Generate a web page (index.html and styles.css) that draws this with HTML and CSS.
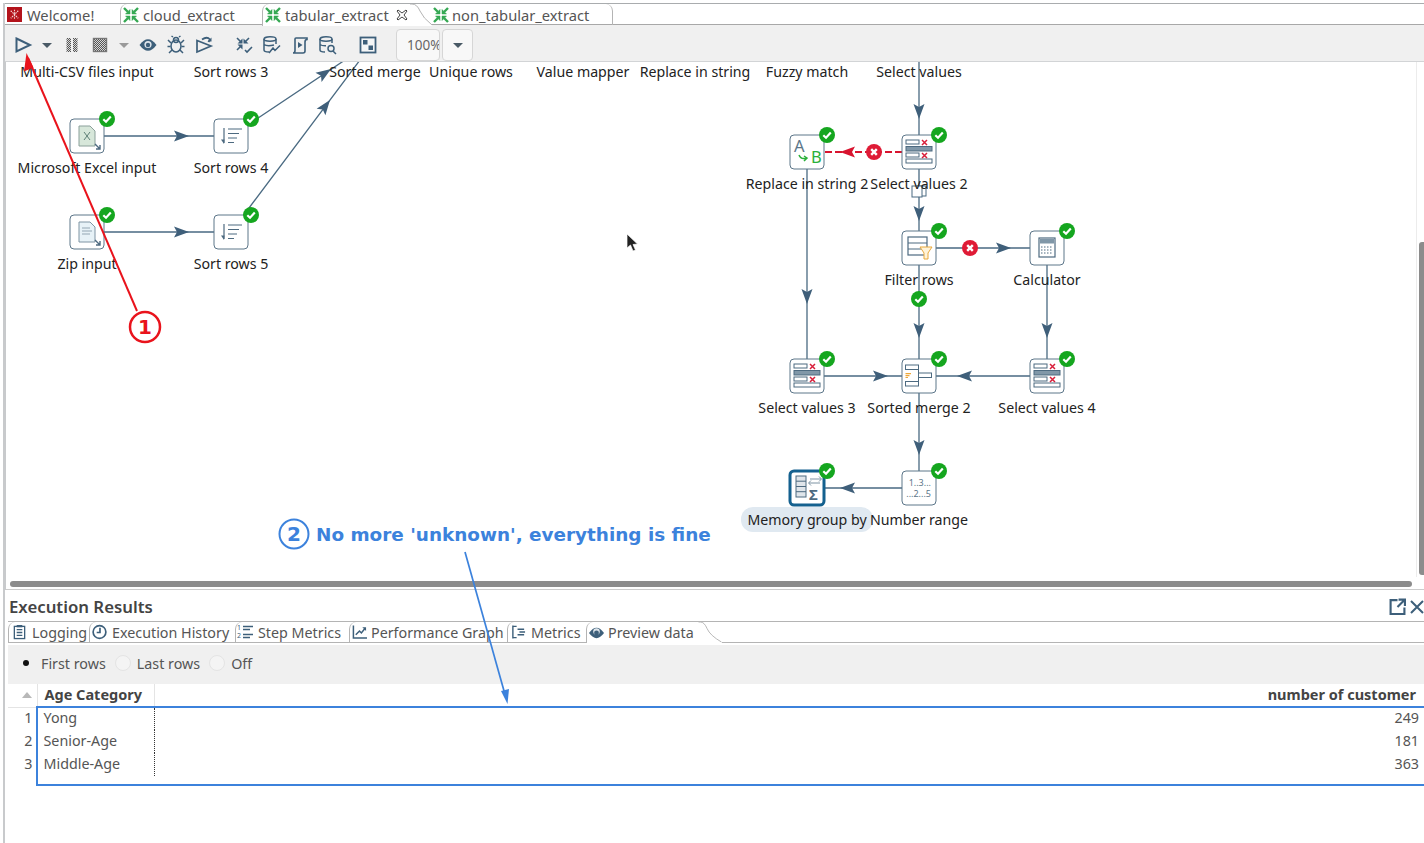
FILE: index.html
```html
<!DOCTYPE html>
<html lang="en">
<head>
    <meta charset="UTF-8"/>
    <title>tabular_extract</title>
    <link rel="stylesheet" href="styles.css">
</head>
<body>

<!-- shared icons -->
<svg class="sprite" xmlns="http://www.w3.org/2000/svg">
    <defs>
        <pattern id="dither" width="2" height="2" patternUnits="userSpaceOnUse">
            <rect width="2" height="2" fill="#d8d8d8"/>
            <rect width="1" height="1" fill="#555"/>
            <rect x="1" y="1" width="1" height="1" fill="#555"/>
        </pattern>
    </defs>
    <symbol id="spoon" viewBox="0 0 16 16">
        <g fill="#35a853" stroke="#35a853">
            <path d="M1 1L5 5M15 1L11 5M1 15L5 11M15 15L11 11" stroke-width="2.4"/>
            <path d="M7 7V2.5L2.5 7ZM9 7V2.5L13.5 7ZM7 9V13.5L2.5 9ZM9 9V13.5L13.5 9Z" stroke-width=".5"/>
        </g>
    </symbol>
    <symbol id="run" viewBox="0 0 20 20"><path d="M3.500 3.500L17 10L3.500 16.500Z" fill="none" stroke="#3d5f7a" stroke-width="2"/></symbol>
    <symbol id="caret" viewBox="0 0 20 20"><path d="M5 8H15L10 13Z" fill="#4a5a66"/></symbol>
    <symbol id="caret-off" viewBox="0 0 20 20"><path d="M5 8H15L10 13Z" fill="#9a9a9a"/></symbol>
    <symbol id="pause" viewBox="0 0 20 20"><path d="M4.500 3H9V17H4.500ZM11 3H15.500V17H11Z" fill="url(#dither)"/></symbol>
    <symbol id="stop" viewBox="0 0 20 20"><rect x="3.500" y="3.500" width="13" height="13" fill="url(#dither)" stroke="#777" stroke-width="1.400"/></symbol>
    <symbol id="eye" viewBox="0 0 20 20"><path d="M1.500 10Q10 -1.500 18.500 10Q10 21.500 1.500 10Z" fill="#3d5f7a"/><circle cx="10" cy="9.500" r="3.600" fill="#dfe6ec"/><circle cx="10" cy="10" r="2.200" fill="#3d5f7a"/></symbol>
    <symbol id="bug" viewBox="0 0 20 20"><g fill="none" stroke="#3d5f7a" stroke-width="1.500"><ellipse cx="10" cy="11" rx="5" ry="6"/><circle cx="10" cy="5" r="2.500"/><path d="M5 8L2 5M15 8L18 5M4.500 11.500H1.500M15.500 11.500H18.500M6 15L3 18M14 15L17 18M7 2L5.500 1M13 2L14.500 1"/></g></symbol>
    <symbol id="replay" viewBox="0 0 20 20"><g fill="none" stroke="#3d5f7a" stroke-width="1.700"><path d="M3 5.500L17 11L3 17Z"/><path d="M8 4.500Q13 1 16 4.500L14.500 7"/></g><path d="M17.500 2.500V6.500H13.500Z" fill="#3d5f7a"/></symbol>
    <symbol id="verify" viewBox="0 0 20 20"><g fill="none" stroke="#3d5f7a" stroke-width="1.600"><path d="M3 3L7 7M15 3L11 7M3 15L7 11M11 15L13 17L18 12"/></g><path d="M8.500 8.500V3.500L3.500 8.500ZM9.500 8.500V3.500L14.500 8.500ZM8.500 9.500V14.500L3.500 9.500Z" fill="#3d5f7a"/></symbol>
    <symbol id="db-graph" viewBox="0 0 20 20"><g fill="none" stroke="#3d5f7a" stroke-width="1.500"><ellipse cx="8" cy="4" rx="6" ry="2.200"/><path d="M2 4V15Q2 17 7 17M14 4V9M2 9.500Q5 11.500 12 10M7 18L11 13L13 15.500L18 10.500"/></g></symbol>
    <symbol id="script" viewBox="0 0 20 20"><g fill="none" stroke="#3d5f7a" stroke-width="1.600"><path d="M6 3H17V4.500Q15 4.500 15 7V16Q15 18 13 18H3Q5 18 5 15.500V4Q5 3 6 3Z"/></g><path d="M8 7L12.500 10L8 13Z" fill="#3d5f7a"/></symbol>
    <symbol id="db-search" viewBox="0 0 20 20"><g fill="none" stroke="#3d5f7a" stroke-width="1.500"><ellipse cx="8" cy="4" rx="6" ry="2.200"/><path d="M2 4V15Q2 17 7 17M14 4V8M2 9.500Q4 11 8 10.800"/><circle cx="13" cy="13.500" r="3"/><path d="M15 16L18 19"/></g></symbol>
    <symbol id="window" viewBox="0 0 20 20"><rect x="2.500" y="2.500" width="15" height="15" fill="#f4f6f7" stroke="#3d5f7a" stroke-width="1.800"/><path d="M5 5H9.500V9.500H5ZM10.500 10.500H15V15H10.500Z" fill="#3d5f7a"/></symbol>

    <symbol id="ok" viewBox="0 0 16 16"><circle cx="8" cy="8" r="8" fill="#15a61f"/><path d="M4.300 8.200L7 10.700L11.800 5.600" fill="none" stroke="#fff" stroke-width="2.200"/></symbol>
    <symbol id="err" viewBox="0 0 16 16"><circle cx="8" cy="8" r="8" fill="#df1b36"/><path d="M5.200 5.200L10.800 10.800M10.800 5.200L5.200 10.800" stroke="#fff" stroke-width="2.400"/></symbol>
    <symbol id="head" viewBox="0 0 16 12" overflow="visible"><path d="M15 6L0 .5L3 6L0 11.500Z" fill="#3f5f7a"/></symbol>

    <symbol id="n-select" viewBox="0 0 34 34">
        <g fill="#fff" stroke="#4d6a80">
            <rect x="4" y="5" width="13" height="4"/>
            <rect x="4" y="11.500" width="26" height="4.500" fill="#8097a8"/>
            <rect x="4" y="18" width="13" height="4"/>
            <rect x="4" y="24" width="26" height="4"/>
        </g>
        <path d="M20 5L25 10M25 5L20 10M20 18L25 23M25 18L20 23" stroke="#d81f3a" stroke-width="1.500"/>
    </symbol>
    <symbol id="n-sort" viewBox="0 0 34 34">
        <path d="M10 9V24" stroke="#4d6a80" stroke-width="1.200"/>
        <path d="M7 20.500L10 25L10.500 20.500Z" fill="#4d6a80"/>
        <path d="M14 10H28M14 14.500H25M14 19H23M14 23.500H20" stroke="#4d6a80" stroke-width="1.200"/>
    </symbol>
    <symbol id="n-excel" viewBox="0 0 34 34">
        <path d="M9 7H20L25 12V27H9Z" fill="#d7e7da" stroke="#8ba09a"/>
        <path d="M14 13L20 21M20 13L14 21" stroke="#5e7f76" stroke-width="1"/>
        <path d="M25 25L30 30M30 26V30H26" fill="none" stroke="#4d6a80" stroke-width="1.400"/>
    </symbol>
    <symbol id="n-zip" viewBox="0 0 34 34">
        <path d="M9 7H20L25 12V27H9Z" fill="#e7f2f7" stroke="#7f94a3"/>
        <path d="M12 13H20M12 16H22M12 19H20" stroke="#93a6b3" stroke-width="1"/>
        <path d="M25 25L30 30M30 26V30H26" fill="none" stroke="#4d6a80" stroke-width="1.400"/>
    </symbol>
    <symbol id="n-filter" viewBox="0 0 34 34">
        <rect x="6" y="6" width="19" height="18" fill="#fff" stroke="#4d6a80" stroke-width="1.200"/>
        <path d="M6 12H25M6 18H25" stroke="#4d6a80" stroke-width="1.200"/>
        <path d="M18 16H30L26 22V28H22V22Z" fill="#fff3d8" stroke="#e8a93d"/>
    </symbol>
    <symbol id="n-calc" viewBox="0 0 34 34">
        <rect x="9" y="7" width="16" height="19" fill="#fff" stroke="#4d6a80" stroke-width="1.200"/>
        <rect x="10" y="8" width="14" height="4.500" fill="#8097a8"/>
        <path d="M11 16H23M11 19H23M11 22H23" stroke="#4d6a80" stroke-width="1.200" stroke-dasharray="1.500 1.500"/>
    </symbol>
    <symbol id="n-merge" viewBox="0 0 34 34">
        <path d="M16.500 8V25" fill="none" stroke="#4d6a80"/>
        <g fill="#fff" stroke="#4d6a80">
            <rect x="3.500" y="6" width="13" height="4.500"/>
            <rect x="3.500" y="22.500" width="13" height="4.500"/>
            <rect x="16.500" y="14" width="13" height="4.500"/>
        </g>
        <path d="M3.500 14H9V15.200H3.500ZM3.500 16H7.500V17.200H3.500ZM3.500 18H6V19H3.500Z" fill="#eda73a"/>
    </symbol>
    <symbol id="n-group" viewBox="0 0 34 34">
        <rect x="6" y="5" width="10" height="21" fill="#dfe5ea" stroke="#4d6a80"/>
        <path d="M6 10.200H16M6 15.500H16M6 20.700H16" stroke="#4d6a80"/>
        <path d="M20 8H31M29 5.500L31.500 8L29 10.500M30 12H19M21 9.500L18.500 12L21 14.500" fill="none" stroke="#7d93a3"/>
    </symbol>

    <symbol id="t-log" viewBox="0 0 16 16"><g fill="none" stroke="#3d5f7a" stroke-width="1.400"><rect x="2.500" y="2" width="11" height="13"/><path d="M5 5.500H11M5 8.500H11M5 11.500H11"/></g><path d="M5 .5H11V3H5Z" fill="#3d5f7a"/></symbol>
    <symbol id="t-clock" viewBox="0 0 16 16"><g fill="none" stroke="#3d5f7a" stroke-width="1.800"><circle cx="8" cy="8" r="6.800"/><path d="M8.500 3.500V8.500H5"/></g></symbol>
    <symbol id="t-steps" viewBox="0 0 18 16"><path d="M7 2.500H17M7 5.500H14M7 10.500H17M7 13.500H14" stroke="#3d5f7a" stroke-width="1.300"/></symbol>
    <symbol id="t-graph" viewBox="0 0 16 16"><g fill="none" stroke="#3d5f7a" stroke-width="1.600"><path d="M1.500 1V14.500H16"/><path d="M4 11L8 7L10 9L14 4"/></g><path d="M11 3H15V7Z" fill="#3d5f7a"/></symbol>
    <symbol id="t-metrics" viewBox="0 0 16 16"><g fill="none" stroke="#3d5f7a" stroke-width="1.500"><path d="M2 1V15M2 2H6M2 14H6"/><path d="M7 5H14M9 8H15M7 11H14"/></g></symbol>
    <symbol id="t-eye" viewBox="0 0 16 16"><path d="M0 8Q8 -3 16 8Q8 19 0 8Z" fill="#3d5f7a"/><circle cx="8" cy="6.500" r="3.500" fill="#dfe6ec"/><circle cx="8" cy="8" r="2.600" fill="#3d5f7a"/></symbol>
</svg>

<div class="app">
    <!-- editor tabs -->
    <div class="tabs">
        <div class="tab tab-welcome">
            <svg class="tab-logo" viewBox="0 0 16 16">
                <rect width="16" height="16" fill="#b3131b"/>
                <path d="M4 4L12 12M12 4L4 12M8 3V13" stroke="#f2d5d5" stroke-width="1.200" stroke-dasharray="1.600 1"/>
            </svg>
            <span>Welcome!</span>
        </div>
        <div class="tab tab-cloud">
            <svg class="tab-icon"><use href="#spoon"/></svg>
            <span>cloud_extract</span>
        </div>
        <div class="tab tab-active">
            <svg class="tab-icon"><use href="#spoon"/></svg>
            <span>tabular_extract</span>
            <svg class="tab-close" viewBox="0 0 12 12">
                <path d="M2 1L6 4L10 1L11 2L8 6L11 10L10 11L6 8L2 11L1 10L4 6L1 2Z" fill="#fff" stroke="#444"/>
            </svg>
        </div>
        <svg class="tab-curve" viewBox="0 0 22 22">
            <path d="M0 0H2Q7 0 10 7T22 21" fill="none" stroke="#b4b4b4"/>
        </svg>
        <div class="tab tab-last">
            <svg class="tab-icon"><use href="#spoon"/></svg>
            <span>non_tabular_extract</span>
        </div>
    </div>

    <!-- run toolbar -->
    <div class="toolbar">
        <svg class="tool"><use href="#run"/></svg>
        <svg class="tool tool-drop"><use href="#caret"/></svg>
        <svg class="tool tool-pause"><use href="#pause"/></svg>
        <svg class="tool"><use href="#stop"/></svg>
        <svg class="tool tool-drop"><use href="#caret-off"/></svg>
        <svg class="tool"><use href="#eye"/></svg>
        <svg class="tool"><use href="#bug"/></svg>
        <svg class="tool"><use href="#replay"/></svg>
        <svg class="tool tool-next"><use href="#verify"/></svg>
        <svg class="tool"><use href="#db-graph"/></svg>
        <svg class="tool"><use href="#script"/></svg>
        <svg class="tool"><use href="#db-search"/></svg>
        <svg class="tool tool-next"><use href="#window"/></svg>
        <div class="zoom-box">100%</div>
        <div class="zoom-drop"><svg class="tool-caret"><use href="#caret"/></svg></div>
    </div>

    <!-- graph canvas, drawn in page coordinates -->
    <div class="canvas">
        <svg class="graph" viewBox="6 62 1418 527" width="1418" height="527">
            <g class="hops">
                <path d="M104 136H214M104 232H214"/>
                <path d="M231 136L375 40M231 232L375 40"/>
                <path d="M919 40V135M919 168V232M919 264V359M936 248H1030"/>
                <path d="M807 168V359M1047 264V359"/>
                <path d="M824 376H902M1030 376H936M919 393V471M902 488H824"/>
            </g>
            <path class="hop-error" d="M902 152H824"/>

            <use href="#head" x="174" y="130" width="16" height="12"/>
            <use href="#head" x="174" y="226" width="16" height="12"/>
            <use href="#head" transform="translate(331 69) rotate(-33.700) translate(-15 -6)" width="16" height="12"/>
            <use href="#head" transform="translate(330 100) rotate(-53.100) translate(-15 -6)" width="16" height="12"/>
            <use href="#head" transform="translate(919 119) rotate(90) translate(-15 -6)" width="16" height="12"/>
            <use href="#head" transform="translate(919 221) rotate(90) translate(-15 -6)" width="16" height="12"/>
            <use href="#head" transform="translate(919 338) rotate(90) translate(-15 -6)" width="16" height="12"/>
            <use href="#head" transform="translate(807 304) rotate(90) translate(-15 -6)" width="16" height="12"/>
            <use href="#head" transform="translate(1047 338) rotate(90) translate(-15 -6)" width="16" height="12"/>
            <use href="#head" transform="translate(919 455) rotate(90) translate(-15 -6)" width="16" height="12"/>
            <use href="#head" x="996" y="242" width="16" height="12"/>
            <use href="#head" x="873" y="370" width="16" height="12"/>
            <use href="#head" transform="translate(957 376) rotate(180) translate(-15 -6)" width="16" height="12"/>
            <use href="#head" transform="translate(840 488) rotate(180) translate(-15 -6)" width="16" height="12"/>
            <path class="head-error" d="M840 152L855 146.500L852 152L855 157.500Z"/>

            <g class="copy-mark">
                <rect x="917" y="186" width="9" height="10"/>
                <rect x="912" y="186" width="10" height="11"/>
            </g>

            <g class="node-box">
                <rect x="70" y="119" width="34" height="34" rx="4"/>
                <rect x="214" y="119" width="34" height="34" rx="4"/>
                <rect x="70" y="215" width="34" height="34" rx="4"/>
                <rect x="214" y="215" width="34" height="34" rx="4"/>
                <rect x="790" y="135" width="34" height="34" rx="4"/>
                <rect x="902" y="135" width="34" height="34" rx="4"/>
                <rect x="902" y="231" width="34" height="34" rx="4"/>
                <rect x="1030" y="231" width="34" height="34" rx="4"/>
                <rect x="790" y="359" width="34" height="34" rx="4"/>
                <rect x="902" y="359" width="34" height="34" rx="4"/>
                <rect x="1030" y="359" width="34" height="34" rx="4"/>
                <rect x="902" y="471" width="34" height="34" rx="4"/>
            </g>
            <rect class="node-selected" x="790" y="471" width="34" height="34" rx="4"/>

            <use href="#n-excel" x="70" y="119" width="34" height="34"/>
            <use href="#n-sort" x="214" y="119" width="34" height="34"/>
            <use href="#n-zip" x="70" y="215" width="34" height="34"/>
            <use href="#n-sort" x="214" y="215" width="34" height="34"/>
            <use href="#n-select" x="902" y="135" width="34" height="34"/>
            <use href="#n-filter" x="902" y="231" width="34" height="34"/>
            <use href="#n-calc" x="1030" y="231" width="34" height="34"/>
            <use href="#n-select" x="790" y="359" width="34" height="34"/>
            <use href="#n-merge" x="902" y="359" width="34" height="34"/>
            <use href="#n-select" x="1030" y="359" width="34" height="34"/>
            <use href="#n-group" x="790" y="471" width="34" height="34"/>

            <text class="replace-a" x="794" y="152">A</text>
            <path class="replace-arrow" d="M799 155Q801 160 806 158M804 156L807 158L804 161"/>
            <text class="replace-b" x="811" y="163">B</text>
            <text class="range-text" x="931" y="486">1..3...</text>
            <text class="range-text" x="931" y="497">...2...5</text>
            <text class="sigma" x="809" y="500">Σ</text>

            <use href="#ok" x="99" y="111" width="16" height="16"/>
            <use href="#ok" x="243" y="111" width="16" height="16"/>
            <use href="#ok" x="99" y="207" width="16" height="16"/>
            <use href="#ok" x="243" y="207" width="16" height="16"/>
            <use href="#ok" x="819" y="127" width="16" height="16"/>
            <use href="#ok" x="931" y="127" width="16" height="16"/>
            <use href="#ok" x="931" y="223" width="16" height="16"/>
            <use href="#ok" x="1059" y="223" width="16" height="16"/>
            <use href="#ok" x="819" y="351" width="16" height="16"/>
            <use href="#ok" x="931" y="351" width="16" height="16"/>
            <use href="#ok" x="1059" y="351" width="16" height="16"/>
            <use href="#ok" x="819" y="463" width="16" height="16"/>
            <use href="#ok" x="931" y="463" width="16" height="16"/>
            <use href="#ok" x="911" y="291" width="16" height="16"/>
            <use href="#err" x="866" y="144" width="16" height="16"/>
            <use href="#err" x="962" y="240" width="16" height="16"/>

            <rect class="label-pill" x="741" y="507" width="132" height="25" rx="12"/>
            <g class="labels">
                <text x="87" y="77">Multi-CSV files input</text>
                <text x="231" y="77">Sort rows 3</text>
                <text x="375" y="77">Sorted merge</text>
                <text x="471" y="77">Unique rows</text>
                <text x="583" y="77">Value mapper</text>
                <text x="695" y="77">Replace in string</text>
                <text x="807" y="77">Fuzzy match</text>
                <text x="919" y="77">Select values</text>
                <text x="87" y="173">Microsoft Excel input</text>
                <text x="231" y="173">Sort rows 4</text>
                <text x="87" y="269">Zip input</text>
                <text x="231" y="269">Sort rows 5</text>
                <text x="807" y="189">Replace in string 2</text>
                <text x="919" y="189">Select values 2</text>
                <text x="919" y="285">Filter rows</text>
                <text x="1047" y="285">Calculator</text>
                <text x="807" y="413">Select values 3</text>
                <text x="919" y="413">Sorted merge 2</text>
                <text x="1047" y="413">Select values 4</text>
                <text x="807" y="525">Memory group by</text>
                <text x="919" y="525">Number range</text>
            </g>
        </svg>
        <div class="vbar"></div>
        <div class="vthumb"></div>
        <div class="hthumb"></div>
    </div>

    <!-- results panel -->
    <section class="results">
        <div class="results-head">
            <h2>Execution Results</h2>
            <svg class="results-btn" viewBox="0 0 16 16">
                <path d="M8 2H1.500V15H14.500V9M9 1.500H15V7.500M15 1.500L8 8.500" fill="none" stroke="#3d5f7a" stroke-width="2"/>
            </svg>
            <svg class="results-close" viewBox="0 0 14 14">
                <path d="M1 1L13 13M13 1L1 13" stroke="#3d5f7a" stroke-width="2"/>
            </svg>
        </div>
        <div class="rtabs">
            <div class="rtab rtab-log"><svg class="rtab-icon"><use href="#t-log"/></svg><span>Logging</span></div>
            <div class="rtab rtab-hist"><svg class="rtab-icon"><use href="#t-clock"/></svg><span>Execution History</span></div>
            <div class="rtab rtab-step">
                <svg class="rtab-icon rtab-icon-wide"><use href="#t-steps"/><text class="step-num" x="1" y="6">1</text><text class="step-num" x="1" y="14">2</text></svg>
                <span>Step Metrics</span>
            </div>
            <div class="rtab rtab-perf"><svg class="rtab-icon"><use href="#t-graph"/></svg><span>Performance Graph</span></div>
            <div class="rtab rtab-metr"><svg class="rtab-icon"><use href="#t-metrics"/></svg><span>Metrics</span></div>
            <div class="rtab rtab-prev"><svg class="rtab-icon"><use href="#t-eye"/></svg><span>Preview data</span></div>
            <svg class="rtab-curve" viewBox="0 0 24 22"><path d="M0 0H2Q6 0 9 7T24 21" fill="none" stroke="#b4b4b4"/></svg>
        </div>
        <div class="options">
            <span class="radio-on"></span><span class="opt-label">First rows</span>
            <span class="radio"></span><span class="opt-label">Last rows</span>
            <span class="radio"></span><span class="opt-label">Off</span>
        </div>
        <table class="data">
            <colgroup><col class="col-num"><col class="col-cat"><col></colgroup>
            <thead>
                <tr>
                    <th class="sort"><span class="sort-mark"></span></th>
                    <th class="cat">Age Category</th>
                    <th class="val">number of customer</th>
                </tr>
            </thead>
            <tbody>
                <tr><td class="num">1</td><td class="cat">Yong</td><td class="val">249</td></tr>
                <tr><td class="num">2</td><td class="cat">Senior-Age</td><td class="val">181</td></tr>
                <tr><td class="num">3</td><td class="cat">Middle-Age</td><td class="val">363</td></tr>
            </tbody>
        </table>
    </section>
</div>

<!-- things drawn on top of the screenshot -->
<svg class="notes" viewBox="0 0 1424 843" width="1424" height="843">
    <path class="pointer" d="M627 234V248L630.500 245L633 251L635.500 250L633 244.500L637.500 244Z"/>
    <path class="note-red" d="M137 311L28 58"/>
    <path class="note-red-head" d="M26.500 53L33.500 67.500L24 71.500Z"/>
    <circle class="note-red-ring" cx="145" cy="327" r="15"/>
    <text class="note-red-num" x="145" y="334">1</text>
    <circle class="note-blue-ring" cx="294" cy="534" r="14.500"/>
    <text class="note-blue-num" x="294" y="541">2</text>
    <text class="note-blue-text" x="316" y="541">No more 'unknown', everything is fine</text>
    <path class="note-blue" d="M465 552L506 698"/>
    <path class="note-blue-head" d="M507.500 704L501 691L509 689Z"/>
    <rect class="note-blue-box" x="37" y="707" width="1388" height="78"/>
</svg>

</body>
</html>
```

FILE: styles.css
```css
* {
    box-sizing: border-box;
}

html, body {
    margin: 0;
    height: 100%;
    overflow: hidden;
}

body {
    font-family: "Noto Sans", sans-serif;
    font-size: 14.300px;
    color: #555;
    background: #fff;
    position: relative;
}

.sprite {
    position: absolute;
    width: 0;
    height: 0;
}

.app {
    margin: 3px 0 0 3px;
    height: 840px;
    border-left: 2px solid #c8cacc;
    display: flex;
    flex-direction: column;
}

/* editor tabs */
.tabs {
    height: 22px;
    flex: none;
    display: flex;
    border-top: 1px solid #a9acae;
    border-bottom: 1px solid #a8a8a8;
    background: #fff;
}

.tab {
    height: 21px;
    display: flex;
    align-items: center;
    gap: 4px;
    white-space: nowrap;
    font-size: 14.700px;
}

.tab-welcome {
    width: 115px;
    padding-left: 2px;
    gap: 5px;
}

.tab-logo {
    width: 15px;
    height: 15px;
}

.tab-icon {
    width: 16px;
    height: 16px;
}

.tab-cloud {
    width: 142px;
    padding-left: 2px;
    border-left: 1px solid #b4b4b4;
    border-top-left-radius: 7px;
}

.tab-active {
    width: 148px;
    padding-left: 2px;
    border-left: 1px solid #b4b4b4;
    border-top-left-radius: 7px;
    height: 22px;
    background: #fff;
    position: relative;
    z-index: 1;
}

.tab-close {
    width: 12px;
    height: 12px;
    margin-left: 3px;
    flex: none;
}

.tab-curve {
    width: 22px;
    height: 22px;
    flex: none;
    background: #fff;
    position: relative;
    z-index: 1;
}

.tab-last {
    width: 181px;
    gap: 3px;
    padding-left: 1px;
    border-right: 1px solid #b4b4b4;
    border-top-right-radius: 7px;
}

/* toolbar */
.toolbar {
    height: 37px;
    flex: none;
    display: flex;
    align-items: center;
    padding: 3px 0 0 4px;
    background: #f0f0f0;
    border-bottom: 1px solid #d2d4d6;
}

.tool {
    width: 28px;
    height: 20px;
    flex: none;
    padding: 0 4px;
}

.tool-drop {
    width: 20px;
    padding: 0;
}

.tool-pause {
    margin-left: 1px;
}

.tool-next {
    margin-left: 12px;
}

.zoom-box,
.zoom-drop {
    height: 32px;
    background: #f8f8f8;
    border: 1px solid #d6d6d6;
    border-radius: 4px;
    display: flex;
    align-items: center;
}

.zoom-box {
    width: 44px;
    margin-left: 14px;
    padding-left: 10px;
    overflow: hidden;
    white-space: nowrap;
    font-size: 13.500px;
    color: #666;
}

.zoom-drop {
    width: 31px;
    margin-left: 2px;
    justify-content: center;
}

.tool-caret {
    width: 20px;
    height: 20px;
}

/* graph canvas */
.canvas {
    height: 528px;
    flex: none;
    position: relative;
    overflow: hidden;
    border-left: 1px solid #c8cacc;
    border-bottom: 1px solid #ccc;
}

.graph {
    display: block;
    font-family: "Noto Sans", sans-serif;
}

.hops path {
    fill: none;
    stroke: #4a6a82;
    stroke-width: 1.300;
}

.hop-error {
    fill: none;
    stroke: #d8142f;
    stroke-width: 2;
    stroke-dasharray: 7 3;
}

.head-error {
    fill: #d8142f;
}

.copy-mark rect {
    fill: #fff;
    stroke: #4a6a82;
}

.node-box rect {
    fill: #fff;
    stroke: #5c7689;
}

.node-selected {
    fill: #fff;
    stroke: #14618f;
    stroke-width: 3;
}

.replace-a {
    font-size: 16.500px;
    fill: #5c7689;
}

.replace-b {
    font-size: 16.500px;
    fill: #2bb03a;
}

.replace-arrow {
    fill: none;
    stroke: #2bb03a;
    stroke-width: 1.500;
}

.range-text {
    font-size: 9px;
    text-anchor: end;
    fill: #5c7689;
}

.sigma {
    font-size: 15px;
    font-weight: bold;
    fill: #4d6a80;
}

.label-pill {
    fill: #e0e9f1;
}

.labels text {
    font-size: 14.200px;
    text-anchor: middle;
    fill: #222;
}

.vbar {
    position: absolute;
    left: 1410px;
    top: 0;
    bottom: 12px;
    width: 1px;
    background: #ececec;
}

.vthumb {
    position: absolute;
    left: 1413px;
    top: 180px;
    bottom: 14px;
    width: 6px;
    background: #8c8c8c;
    border-radius: 3px 0 0 3px;
}

.hthumb {
    position: absolute;
    left: 4px;
    bottom: 2px;
    width: 1402px;
    height: 6px;
    background: #8c8c8c;
    border-radius: 3px;
}

/* results panel */
.results {
    flex: 1;
    min-height: 0;
    display: flex;
    flex-direction: column;
}

.results-head {
    height: 31px;
    flex: none;
    display: flex;
    align-items: center;
    padding: 2px 0 0 4px;
}

.results-head h2 {
    margin: 0 auto 0 0;
    font-size: 16.800px;
    font-weight: 600;
    color: #444;
}

.results-btn {
    width: 17px;
    height: 17px;
    margin-right: 4px;
}

.results-close {
    width: 14px;
    height: 14px;
}

.rtabs {
    height: 22px;
    flex: none;
    margin-left: 3px;
    display: flex;
    border-top: 1px solid #b4b4b4;
    border-bottom: 1px solid #b4b4b4;
}

.rtab {
    height: 20px;
    display: flex;
    align-items: center;
    gap: 5px;
    padding-left: 4px;
    border-left: 1px solid #b4b4b4;
    border-top-left-radius: 7px;
    white-space: nowrap;
    flex: none;
}

.rtab-icon {
    width: 15px;
    height: 16px;
    flex: none;
}

.rtab-icon-wide {
    width: 18px;
    margin-left: -2px;
    margin-right: -1px;
}

.step-num {
    font-size: 7px;
    fill: #3d5f7a;
}

.rtab-log { width: 81px; padding-left: 3px; }
.rtab-hist { width: 146px; padding-left: 2px; }
.rtab-step { width: 114px; padding-left: 2px; }
.rtab-perf { width: 158px; padding-left: 2px; gap: 4px; }
.rtab-metr { width: 79px; padding-left: 3px; }
.rtab-prev { width: 112px; padding-left: 2px; gap: 4px; height: 21px; background: #fff; position: relative; }

.rtab-curve {
    width: 24px;
    height: 21px;
    flex: none;
    background: #fff;
    position: relative;
}

.options {
    height: 39px;
    flex: none;
    margin: 2px 0 0 3px;
    padding: 0 0 3px 15px;
    display: flex;
    align-items: center;
    background: #f0f0f0;
}

.radio-on {
    width: 6px;
    height: 6px;
    margin-right: 12px;
    border-radius: 50%;
    background: #111;
}

.radio {
    width: 16px;
    height: 16px;
    margin: 0 6px 0 8px;
    border-radius: 50%;
    background: #f4f4f4;
    border: 1px solid #e4e4e4;
}

.opt-label {
    margin-right: 1px;
}

.data {
    width: 1416px;
    margin-left: 3px;
    table-layout: fixed;
    border-collapse: collapse;
}

.col-num {
    width: 29px;
}

.col-cat {
    width: 117px;
}

.data th {
    height: 23px;
    padding: 0 0 2px;
    font-size: 14.500px;
    font-weight: 700;
    color: #444;
    border-bottom: 1px solid #e4e4e4;
}

.data td {
    height: 23px;
    padding: 0 0 2px;
    line-height: 20px;
}

th.sort {
    border-right: 1px solid #e4e4e4;
    text-align: right;
    padding-right: 5px;
}

.sort-mark {
    display: inline-block;
    border: 5px solid transparent;
    border-top: 0;
    border-bottom: 6px solid #b8b8b8;
    vertical-align: 2px;
}

th.cat {
    text-align: left;
    padding-left: 7px;
    border-right: 1px solid #e4e4e4;
}

th.val {
    text-align: right;
    padding-right: 8px;
}

td.num {
    text-align: right;
    padding-right: 4px;
    border-right: 1px dotted #333;
}

td.cat {
    padding-left: 6px;
    border-right: 1px dotted #333;
}

td.val {
    text-align: right;
    padding-right: 5px;
}

/* notes on top */
.notes {
    position: absolute;
    left: 0;
    top: 0;
    pointer-events: none;
    font-family: "DejaVu Sans", sans-serif;
    font-weight: bold;
}

.pointer {
    fill: #222;
    stroke: #fff;
    stroke-width: 0.700;
}

.note-red {
    fill: none;
    stroke: #e9131c;
    stroke-width: 2;
}

.note-red-head {
    fill: #e9131c;
}

.note-red-ring {
    fill: #fff;
    stroke: #e9131c;
    stroke-width: 2.500;
}

.note-red-num {
    font-size: 20px;
    text-anchor: middle;
    fill: #e9131c;
}

.note-blue-ring {
    fill: #fff;
    stroke: #3c82dc;
    stroke-width: 2;
}

.note-blue-num {
    font-size: 20px;
    text-anchor: middle;
    fill: #3c82dc;
}

.note-blue-text {
    font-size: 18.400px;
    fill: #3c82dc;
}

.note-blue {
    fill: none;
    stroke: #3c82dc;
    stroke-width: 1.700;
}

.note-blue-head {
    fill: #3c82dc;
}

.note-blue-box {
    fill: none;
    stroke: #3c82dc;
    stroke-width: 2;
}
```
